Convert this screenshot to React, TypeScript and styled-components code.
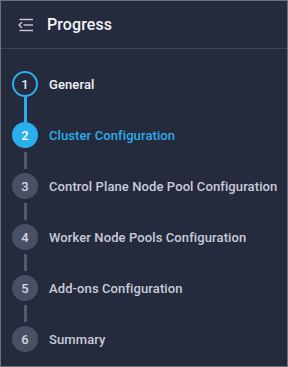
import React from "react";
import styled, { createGlobalStyle } from "styled-components";

const GlobalStyle = createGlobalStyle`
  html, body {
    margin: 0;
    padding: 0;
    background: #262a3d;
  }
  * {
    box-sizing: border-box;
  }
`;

const Panel = styled.aside`
  width: 288px;
  height: 367px;
  background-color: #262a3d;
  border: 1px solid #6c7080;
  font-family: Roboto, "Liberation Sans", sans-serif;
  display: flex;
  flex-direction: column;
`;

const Header = styled.header`
  height: 48px;
  display: flex;
  align-items: center;
  gap: 12px;
  padding-left: 16px;
  border-bottom: 1px solid #3b4759;
`;

const Title = styled.h2`
  margin: 0;
  font-size: 16px;
  font-weight: 500;
  color: #f2f3f7;
  letter-spacing: 0.1px;
`;

const StepList = styled.ol`
  list-style: none;
  margin: 0;
  padding: 22px 0 0 11px;
  display: flex;
  flex-direction: column;
`;

const StepRow = styled.li`
  display: flex;
  align-items: center;
  gap: 11px;
  height: 26px;
`;

const Circle = styled.span<{ $state: "done" | "active" | "todo" }>`
  width: 26px;
  height: 26px;
  flex-shrink: 0;
  border-radius: 50%;
  display: flex;
  align-items: center;
  justify-content: center;
  font-size: 13px;
  font-weight: 500;
  background-color: ${(p) =>
    p.$state === "active" ? "#29b0ec" : p.$state === "done" ? "transparent" : "#4b4f63"};
  border: ${(p) => (p.$state === "done" ? "2px solid #29b0ec" : "none")};
  color: ${(p) =>
    p.$state === "active" ? "#ffffff" : p.$state === "done" ? "#d6ecf8" : "#d3d6e0"};
`;

const Label = styled.span<{ $state: "done" | "active" | "todo" }>`
  font-size: 13px;
  font-weight: 500;
  letter-spacing: 0.1px;
  white-space: nowrap;
  color: ${(p) =>
    p.$state === "active" ? "#2aaeea" : p.$state === "done" ? "#f4f5f8" : "#c9ccd8"};
`;

const Connector = styled.li<{ $active: boolean }>`
  height: 25px;
  width: 26px;
  display: flex;
  justify-content: center;
  padding: ${(p) => (p.$active ? "0" : "4px 0")};

  &::before {
    content: "";
    display: block;
    width: 3px;
    height: 100%;
    background-color: ${(p) => (p.$active ? "#29b0ec" : "#54596d")};
  }
`;

const MenuIcon = () => (
  <svg width="18" height="14" viewBox="0 0 18 14" fill="none" stroke="#c9ccd8" strokeWidth="1.4">
    <path d="M2.5 1.5 H16" />
    <path d="M6.5 7 H16" />
    <path d="M2.5 12.5 H16" />
    <path d="M4.6 4.6 L2 7 L4.6 9.4" strokeLinecap="round" strokeLinejoin="round" />
  </svg>
);

const steps = [
  "General",
  "Cluster Configuration",
  "Control Plane Node Pool Configuration",
  "Worker Node Pools Configuration",
  "Add-ons Configuration",
  "Summary",
];

const current = 1;

export default function App() {
  return (
    <>
      <GlobalStyle />
      <Panel>
        <Header>
          <MenuIcon />
          <Title>Progress</Title>
        </Header>
        <StepList>
          {steps.map((name, i) => {
            const state = i < current ? "done" : i === current ? "active" : "todo";
            return (
              <React.Fragment key={name}>
                {i > 0 && <Connector $active={i <= current} />}
                <StepRow>
                  <Circle $state={state}>{i + 1}</Circle>
                  <Label $state={state}>{name}</Label>
                </StepRow>
              </React.Fragment>
            );
          })}
        </StepList>
      </Panel>
    </>
  );
}
